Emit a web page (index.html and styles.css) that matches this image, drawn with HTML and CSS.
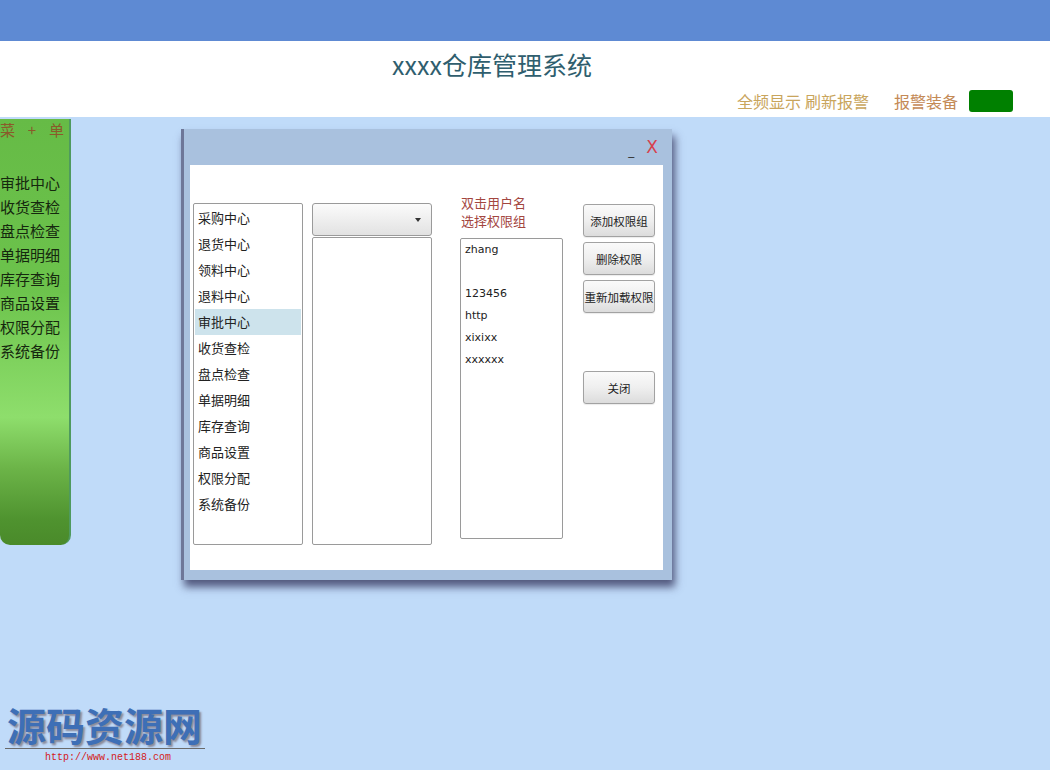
FILE: index.html
```html
<!DOCTYPE html>
<html lang="zh-CN">
<head>
<meta charset="utf-8">
<title>xxxx仓库管理系统</title>
<link rel="stylesheet" href="styles.css">
</head>
<body>
<div class="topbar"></div>
<header class="header">
  <h1 class="title">xxxx仓库管理系统</h1>
  <div class="toolbar">
    <span class="tool tool-a">全频显示</span>
    <span class="tool tool-a tool-gap">刷新报警</span>
    <span class="tool tool-b">报警装备</span>
    <span class="status-box"></span>
  </div>
</header>
<main class="workspace">
  <aside class="sidebar">
    <div class="side-head"><span>菜</span><span>+</span><span>单</span></div>
    <ul class="side-menu">
      <li>审批中心</li>
      <li>收货查检</li>
      <li>盘点检查</li>
      <li>单据明细</li>
      <li>库存查询</li>
      <li>商品设置</li>
      <li>权限分配</li>
      <li>系统备份</li>
    </ul>
  </aside>
  <section class="dialog">
    <div class="dialog-bar">
      <span class="win-min">_</span>
      <span class="win-close">X</span>
    </div>
    <div class="dialog-body">
      <ul class="listbox modules">
        <li>采购中心</li>
        <li>退货中心</li>
        <li>领料中心</li>
        <li>退料中心</li>
        <li class="selected">审批中心</li>
        <li>收货查检</li>
        <li>盘点检查</li>
        <li>单据明细</li>
        <li>库存查询</li>
        <li>商品设置</li>
        <li>权限分配</li>
        <li>系统备份</li>
      </ul>
      <div class="col-groups">
        <div class="combo"><span class="combo-arrow"></span></div>
        <div class="listbox groups"></div>
      </div>
      <div class="col-users">
        <p class="hint">双击用户名<br>选择权限组</p>
        <ul class="listbox users">
          <li>zhang</li>
          <li></li>
          <li>123456</li>
          <li>http</li>
          <li>xixixx</li>
          <li>xxxxxx</li>
        </ul>
      </div>
      <div class="col-buttons">
        <button class="btn">添加权限组</button>
        <button class="btn">删除权限</button>
        <button class="btn">重新加载权限</button>
        <button class="btn btn-close">关闭</button>
      </div>
    </div>
  </section>
</main>
<div class="watermark">
  <div class="wm-title">源码资源网</div>
  <div class="wm-url">http://www.net188.com</div>
</div>
</body>
</html>
```
FILE: styles.css
```css
* { box-sizing: border-box; }
html, body { margin: 0; padding: 0; }
body {
  width: 1050px;
  height: 770px;
  overflow: hidden;
  position: relative;
  background: #c0dbf9;
  font-family: "Noto Sans CJK SC", "Noto Sans", sans-serif;
  color: #222;
}
ul { list-style: none; margin: 0; padding: 0; }
p, h1 { margin: 0; }

.topbar {
  height: 41px;
  background: #5e8ad3;
}

.header {
  height: 76px;
  background: #ffffff;
  display: flex;
  flex-direction: column;
}
.title {
  margin-top: 8px;
  padding-right: 66px;
  height: 30px;
  line-height: 30px;
  text-align: center;
  font-size: 25px;
  font-weight: normal;
  color: #2f5e6e;
}
.toolbar {
  margin-top: 11px;
  height: 22px;
  display: flex;
  justify-content: flex-end;
  align-items: center;
  padding-right: 37px;
}
.tool {
  font-size: 16px;
  line-height: 22px;
}
.tool-a { color: #c9a55c; margin-right: 4px; }
.tool-gap { margin-right: 25px; }
.tool-b { color: #c48a56; margin-right: 11px; }
.status-box {
  width: 44px;
  height: 22px;
  background: #008000;
  border-radius: 3px;
}

.workspace {
  display: flex;
  align-items: flex-start;
}

.sidebar {
  margin-top: 2px;
  width: 71px;
  height: 426px;
  border-radius: 0 0 10px 10px;
  border-right: 2px solid #4f9a5e;
  background: linear-gradient(to bottom,
    #66bb46 0%, #6cc34c 40%, #8ede6c 70%, #6cb448 82%, #4f932f 94%, #4a8a2a 100%);
}
.side-head {
  display: flex;
  justify-content: space-between;
  width: 64px;
  height: 22px;
  line-height: 22px;
  font-size: 15px;
  color: #8a5a2a;
}
.side-menu {
  margin-top: 30px;
}
.side-menu li {
  height: 24px;
  line-height: 24px;
  font-size: 15px;
  color: #15280e;
  white-space: nowrap;
}

.dialog {
  margin-left: 110px;
  margin-top: 12px;
  width: 491px;
  height: 451px;
  background: #a9c1de;
  border-left: 3px solid #6e7798;
  box-shadow: 3px 7px 8px rgba(45, 45, 85, 0.75);
  display: flex;
  flex-direction: column;
}
.dialog-bar {
  height: 36px;
  display: flex;
  justify-content: flex-end;
  align-items: center;
  padding-right: 14px;
  gap: 12px;
}
.win-min {
  font-family: "DejaVu Sans", sans-serif;
  font-size: 12px;
  color: #333;
  margin-top: 8px;
}
.win-close {
  font-family: "DejaVu Sans", sans-serif;
  font-size: 17px;
  color: #d8404e;
  line-height: 20px;
}
.dialog-body {
  margin: 0 9px 10px 6px;
  flex: 1;
  background: #ffffff;
  display: flex;
  align-items: flex-start;
  padding: 29px 0 0 3px;
}

.listbox {
  border: 1px solid #9a9a9a;
  border-radius: 2px;
  background: #fff;
}
.modules {
  margin-top: 9px;
  width: 110px;
  height: 342px;
  padding-top: 1px;
  margin-right: 9px;
}
.modules li {
  height: 26px;
  line-height: 26px;
  margin: 0 1px;
  padding-left: 3px;
  font-size: 13px;
  color: #222;
}
.modules li.selected { background: #cde3ec; }

.col-groups {
  margin-top: 9px;
  width: 120px;
  margin-right: 28px;
  display: flex;
  flex-direction: column;
  gap: 1px;
}
.combo {
  height: 33px;
  border: 1px solid #9a9a9a;
  border-radius: 3px;
  background: linear-gradient(to bottom, #fbfbfb, #e2e2e2);
  display: flex;
  justify-content: flex-end;
  align-items: center;
  padding-right: 10px;
}
.combo-arrow {
  width: 0;
  height: 0;
  border-left: 3px solid transparent;
  border-right: 3px solid transparent;
  border-top: 4px solid #333;
}
.groups {
  height: 308px;
}

.col-users {
  width: 103px;
  margin-right: 20px;
}
.hint {
  padding-left: 1px;
  font-size: 13px;
  line-height: 18px;
  color: #a3463f;
}
.users {
  margin-top: 8px;
  height: 301px;
  padding-top: 0;
}
.users li {
  height: 22px;
  line-height: 22px;
  padding-left: 4px;
  font-family: "DejaVu Sans", Verdana, sans-serif;
  font-size: 11px;
  color: #222;
}

.col-buttons {
  margin-top: 10px;
  width: 72px;
  display: flex;
  flex-direction: column;
  gap: 5px;
}
.btn {
  width: 72px;
  height: 33px;
  padding: 0;
  border: 1px solid #a2a2a2;
  border-radius: 3px;
  background: linear-gradient(to bottom, #fafafa 0%, #efefef 50%, #dcdcdc 100%);
  font-family: "Noto Sans CJK SC", sans-serif;
  font-size: 11.5px;
  color: #222;
  white-space: nowrap;
  overflow: visible;
  box-shadow: 0 1px 1px rgba(0,0,0,0.08);
}
.btn-close { margin-top: 53px; }

.watermark {
  position: absolute;
  left: 5px;
  top: 700px;
  width: 200px;
}
.wm-title {
  padding-left: 2px;
  font-size: 39px;
  line-height: 48px;
  font-weight: bold;
  letter-spacing: 0px;
  color: #3e6fb6;
  text-shadow: 2px 2px 2px #8a8a9a;
  border-bottom: 1px solid #6a6a6a;
  white-space: nowrap;
}
.wm-url {
  margin-top: 2px;
  padding-left: 40px;
  font-family: "Liberation Mono", monospace;
  font-size: 10px;
  line-height: 14px;
  color: #d42020;
}
```
